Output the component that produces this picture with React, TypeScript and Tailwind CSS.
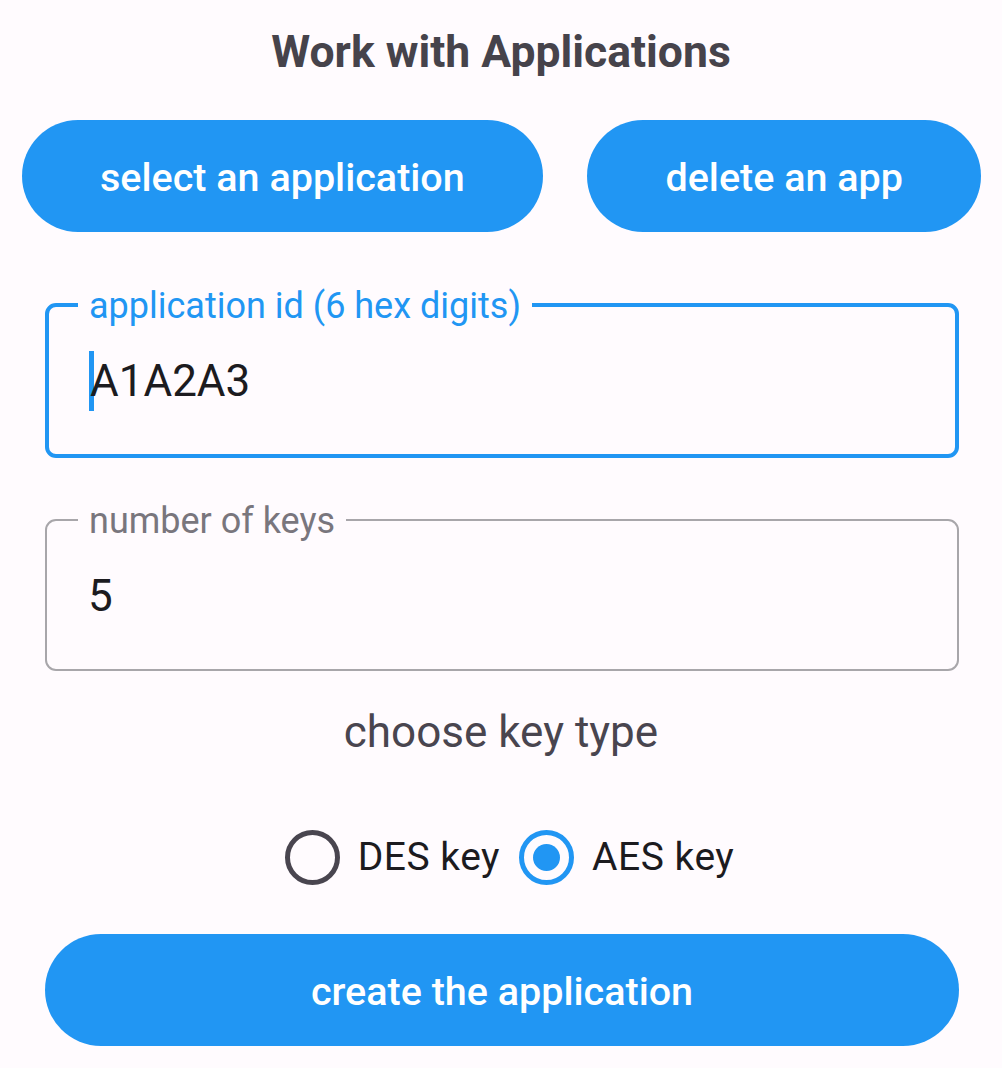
import { useState } from 'react'

type Campo = {
  rotulo: string
  valor: string
  focado?: boolean
}

function CampoContornado({ rotulo, valor, focado }: Campo) {
  return (
    <fieldset
      className={
        'rounded-[11px] pl-[41px] pr-4 pt-[27px] pb-[43px] ' +
        (focado ? 'border-[4px] border-[#2196f3]' : 'border-[2px] border-[#a8a6aa]')
      }
    >
      <legend
        className={
          'px-[11px] text-[36px] leading-[38px] translate-y-[1px] ' +
          (focado ? '-ml-[12px] text-[#2196f3]' : '-ml-[10px] text-[#79767d]')
        }
      >
        {rotulo}
      </legend>
      <div className="flex items-center h-[60px] text-[44px] leading-[60px] text-[#1c1b1f]">
        {focado && (
          <span className="inline-block w-[5px] h-[60px] bg-[#2196f3] -ml-[1px] -mr-[4px]" />
        )}
        <span>{valor}</span>
      </div>
    </fieldset>
  )
}

function Radio({ marcado, rotulo, onClick }: { marcado: boolean; rotulo: string; onClick: () => void }) {
  return (
    <button type="button" onClick={onClick} className="flex items-center gap-[18px]">
      <span
        className={
          'w-[55px] h-[55px] rounded-full border-[5.5px] flex items-center justify-center ' +
          (marcado ? 'border-[#2196f3]' : 'border-[#49454f]')
        }
      >
        {marcado && <span className="w-[27px] h-[27px] rounded-full bg-[#2196f3]" />}
      </span>
      <span className="text-[39px] leading-[56px] tracking-[0.5px] text-[#1c1b1f]">{rotulo}</span>
    </button>
  )
}

export default function App() {
  const [tipo, setTipo] = useState<'DES' | 'AES'>('AES')

  return (
    <div className="w-[1002px] h-[1068px] bg-[#fffbfe] overflow-hidden font-['Roboto',sans-serif]">
      <h1 className="pt-[26px] text-center text-[44.5px] leading-[52px] font-bold text-[#46434b]">
        Work with Applications
      </h1>

      <div className="mt-[42px] flex justify-between pl-[22px] pr-[21px]">
        <button
          type="button"
          className="h-[112px] px-[78px] pt-[4px] rounded-full bg-[#2196f3] text-white text-[39.5px] font-medium"
        >
          select an application
        </button>
        <button
          type="button"
          className="h-[112px] px-[78px] pt-[4px] rounded-full bg-[#2196f3] text-white text-[39.5px] font-medium"
        >
          delete an app
        </button>
      </div>

      <div className="ml-[45px] mr-[43px] mt-[54px] flex flex-col gap-[43px]">
        <CampoContornado rotulo="application id (6 hex digits)" valor="A1A2A3" focado />
        <CampoContornado rotulo="number of keys" valor="5" />
      </div>

      <p className="mt-[35px] text-center text-[44px] leading-[52px] text-[#49454f]">choose key type</p>

      <div className="mt-[71px] flex justify-center gap-[19px] pl-[17px]">
        <Radio marcado={tipo === 'DES'} rotulo="DES key" onClick={() => setTipo('DES')} />
        <Radio marcado={tipo === 'AES'} rotulo="AES key" onClick={() => setTipo('AES')} />
      </div>

      <div className="ml-[45px] mr-[43px] mt-[49px]">
        <button
          type="button"
          className="w-full h-[112px] pt-[4px] rounded-full bg-[#2196f3] text-white text-[39.5px] font-medium"
        >
          create the application
        </button>
      </div>
    </div>
  )
}
